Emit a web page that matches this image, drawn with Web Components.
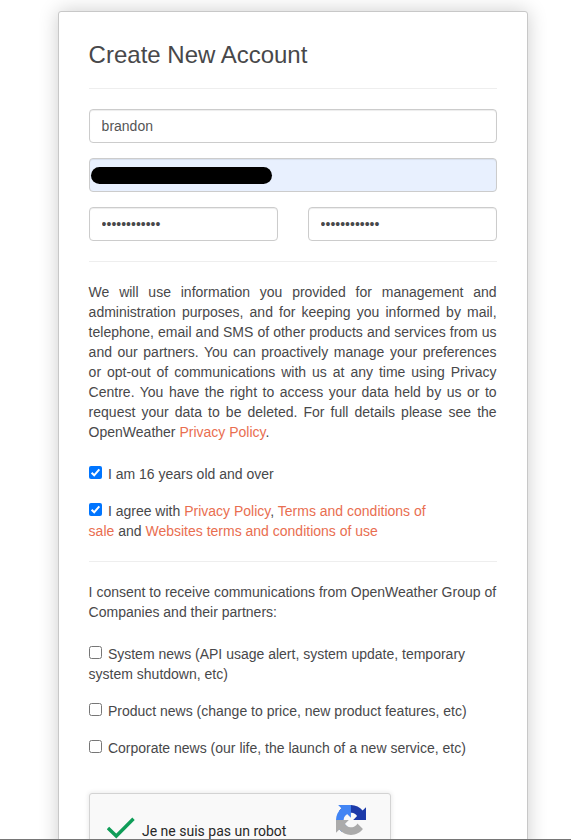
<!DOCTYPE html>
<html lang="en">
<head>
<meta charset="utf-8">
<title>Create New Account</title>
<style>
html,body{margin:0;height:840px;overflow:hidden;background:#fff}
body{font:14px/20px "Liberation Sans",Arial,sans-serif;color:#48484a}
</style>
</head>
<body>
<signup-page></signup-page>
<script>
const define = (name, html, setup) => customElements.define(name, class extends HTMLElement {
  constructor() {
    super();
    const t = document.createElement('template');
    t.innerHTML = html;
    this.attachShadow({mode: 'open'}).append(t.content.cloneNode(true));
  }
  connectedCallback() { if (setup) setup(this, this.shadowRoot); }
});

define('form-card', `<style>
:host{display:block;box-sizing:border-box;width:470px;height:900px;margin:11px 0 0 58px;padding:30px;border:1px solid #c8c8c8;border-radius:3px;background:#fff;box-shadow:0 0 20px rgba(0,0,0,.2)}
</style><slot></slot>`);

define('rule-line', `<style>:host{display:block;height:1px;margin:20px 0;background:#eee}</style>`);

define('text-field', `<style>
:host{display:block;flex:1;min-width:0}
.box{position:relative;display:flex}
input{box-sizing:border-box;width:100%;height:34px;margin:0;padding:6px 11.6px;border:1px solid #ccc;border-radius:4px;background:var(--field,#fff);box-shadow:inset 0 1px 1px rgba(0,0,0,.075);font:14px/20px "Liberation Sans",Arial,sans-serif;color:#555;outline:0}
input[type=password]{color:#48484a}
</style><div class="box"><input><slot></slot></div>`, (el, r) => {
  const i = r.querySelector('input');
  i.type = el.getAttribute('type') || 'text';
  i.value = el.getAttribute('value') || '';
});

define('redaction-bar', `<style>:host{position:absolute;left:2px;top:9px;width:181px;height:17px;border-radius:9px;background:#000}</style>`);

define('text-link', `<style>:host{display:inline;color:#e96e50}</style><slot></slot>`);

define('check-row', `<style>
:host{display:block;margin:0 0 17px -.4px}
svg{display:inline-block;width:13px;height:13px;margin:0 5.9px 0 .4px;vertical-align:0}
.on{display:none}
:host([checked]) .on{display:inline}
:host([checked]) .off{display:none}
</style><svg viewBox="0 0 13 13"><rect class="off" x=".5" y=".5" width="12" height="12" rx="2" fill="#fff" stroke="#767676"/><g class="on"><rect width="13" height="13" rx="2" fill="#0075ff"/><path d="M2.6 6.7 5.2 9.3 10.3 3.3" fill="none" stroke="#fff" stroke-width="2"/></g></svg><slot></slot>`);

define('robot-check', `<style>
:host{display:flex;box-sizing:border-box;width:302px;height:78px;margin-top:35px;border:1px solid #d3d3d3;border-radius:3px;background:#f9f9f9;box-shadow:0 0 4px 1px rgba(0,0,0,.08);font:14px/17px Roboto,sans-serif;color:#282828}
.tick{flex:none;width:28px;height:22px;margin:23px 0 0 17px}
span{flex:none;margin:29px 0 0 7px;width:194px;white-space:nowrap}
.logo{flex:none;width:30px;height:30px;margin-top:11px}
</style>
<svg class="tick" viewBox="0 0 28 22"><path d="M1 11 9.3 19 26.5 1.7" fill="none" stroke="#0f9d58" stroke-width="3.4"/></svg>
<span><slot></slot></span>
<svg class="logo" viewBox="0 0 64 64"><path fill="#1c3aa9" d="M64 31.955l-.033-1.37V4.687l-7.16 7.16C50.948 4.674 42.033.093 32.05.093c-10.4 0-19.622 4.96-25.458 12.64l11.736 11.86a15.55 15.55 0 0 1 4.754-5.334c2.05-1.6 4.952-2.906 8.968-2.906.485 0 .86.057 1.135.163 4.976.393 9.288 3.14 11.828 7.124l-8.307 8.307L64 31.953"/><path fill="#4285f4" d="M31.862.094l-1.37.033H4.594l7.16 7.16C4.58 13.147 0 22.06 0 32.046c0 10.4 4.96 19.622 12.64 25.458L24.5 45.768a15.55 15.55 0 0 1-5.334-4.754c-1.6-2.05-2.906-4.952-2.906-8.968 0-.485.057-.86.163-1.135.393-4.976 3.14-9.288 7.124-11.828l8.307 8.307L31.86.095"/><path fill="#ababab" d="M.001 32.045l.033 1.37v25.898l7.16-7.16c5.86 7.173 14.774 11.754 24.76 11.754 10.4 0 19.622-4.96 25.458-12.64l-11.736-11.86a15.55 15.55 0 0 1-4.754 5.334c-2.05 1.6-4.952 2.906-8.968 2.906-.485 0-.86-.057-1.135-.163-4.976-.393-9.288-3.14-11.828-7.124l8.307-8.307c-10.522.04-22.4.066-27.295-.005"/></svg>`);

define('signup-page', `<style>
:host{position:relative;height:840px;overflow:hidden;display:flow-root}
h1{margin:0 0 20px -.4px;height:26px;font-size:24px;line-height:26px;font-weight:400}
.fields{display:flex;flex-direction:column;gap:15px}
.pair{display:flex;gap:30px}
p{margin:0 .4px 0 -.4px;text-align:justify}
.consent{text-align:left;white-space:nowrap}
.checks{margin-top:22px}
.auto{--field:#e8f0fe}
.last{margin-bottom:0}
.edge{position:absolute;left:0;right:0;bottom:0;height:1px;background:#767676}
</style>
<form-card>
<h1>Create New Account</h1>
<rule-line></rule-line>
<div class="fields">
<text-field value="brandon"></text-field>
<text-field class="auto"><redaction-bar></redaction-bar></text-field>
<div class="pair"><text-field type="password" value="abcdefghijkl"></text-field><text-field type="password" value="abcdefghijkl"></text-field></div>
</div>
<rule-line></rule-line>
<p>We will use information you provided for management and administration purposes, and for keeping you informed by mail, telephone, email and SMS of other products and services from us and our partners. You can proactively manage your preferences or opt-out of communications with us at any time using Privacy Centre. You have the right to access your data held by us or to request your data to be deleted. For full details please see the OpenWeather <text-link>Privacy Policy</text-link>.</p>
<div class="checks">
<check-row checked>I am 16 years old and over</check-row>
<check-row checked class="last">I agree with <text-link>Privacy Policy</text-link>, <text-link>Terms and conditions of<br>sale</text-link> and <text-link>Websites terms and conditions of use</text-link></check-row>
</div>
<rule-line></rule-line>
<p class="consent">I consent to receive communications from OpenWeather Group of<br>Companies and their partners:</p>
<div class="checks">
<check-row>System news (API usage alert, system update, temporary<br>system shutdown, etc)</check-row>
<check-row>Product news (change to price, new product features, etc)</check-row>
<check-row class="last">Corporate news (our life, the launch of a new service, etc)</check-row>
</div>
<robot-check>Je ne suis pas un robot</robot-check>
</form-card>
<div class="edge"></div>`);
</script>
</body>
</html>
